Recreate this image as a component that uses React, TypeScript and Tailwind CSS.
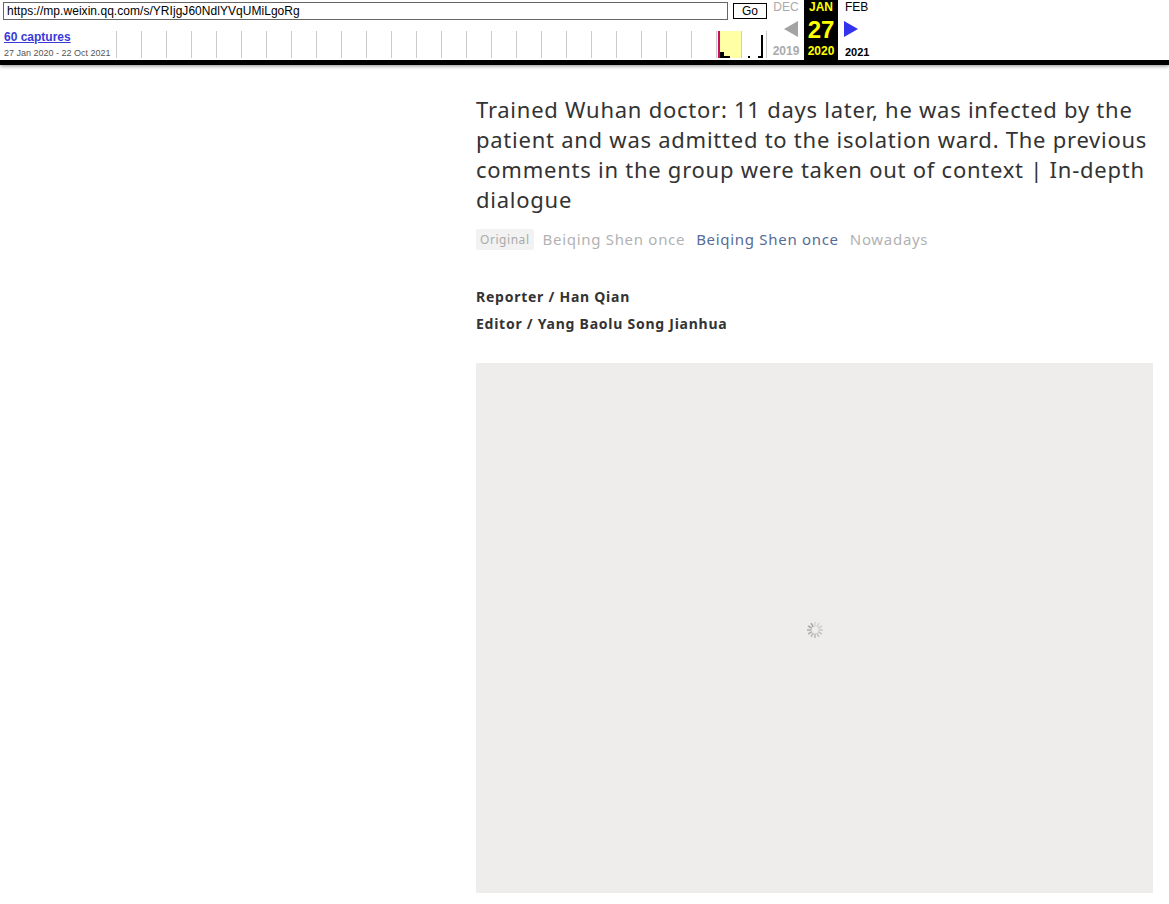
const ticks = Array.from({ length: 27 }, (_, i) => i * 25 + 0.5);

function Timeline() {
  return (
    <svg width="652" height="27" className="block">
      <rect x="601" y="0" width="25" height="27" fill="#ffffa6" />
      {ticks.map((x) => (
        <line key={x} x1={x} y1="0" x2={x} y2="27" stroke="#ccc" />
      ))}
      <rect x="602" y="0" width="2" height="27" fill="#c9105f" />
      <rect x="604" y="21" width="4" height="6" fill="#000" />
      <rect x="604" y="25" width="10" height="2" fill="#000" />
      <rect x="632" y="25" width="2" height="2" fill="#000" />
      <rect x="645" y="4" width="2" height="23" fill="#000" />
      <rect x="642" y="25" width="4" height="2" fill="#000" />
    </svg>
  );
}

function Spinner() {
  const spokes = Array.from({ length: 12 }, (_, i) => i);
  return (
    <svg width="18" height="18" viewBox="0 0 18 18">
      {spokes.map((i) => (
        <line
          key={i}
          x1="9"
          y1="1"
          x2="9"
          y2="5.5"
          stroke="#999"
          strokeWidth="1.6"
          opacity={0.25 + (i / 11) * 0.6}
          transform={`rotate(${i * 30} 9 9)`}
        />
      ))}
    </svg>
  );
}

export default function App() {
  return (
    <div className="bg-white min-h-[904px] font-['Noto_Sans',sans-serif]">
      {/* Wayback toolbar */}
      <div className="h-[65px] border-b-[5px] border-black shadow-[0_1px_4px_rgba(0,0,0,0.45)] flex font-['Liberation_Sans',sans-serif] text-black">
        <div className="w-[770px] shrink-0">
          <div className="flex pt-[2px] pl-[3px] h-[31px] items-start">
            <div className="w-[725px] h-[18px] border border-[#666] text-[12px] leading-[16px] pl-[3px] tracking-[0.04px]">
              https://mp.weixin.qq.com/s/YRIjgJ60NdlYVqUMiLgoRg
            </div>
            <div className="ml-[5px] mt-[1px] w-[34px] h-[16px] border border-black text-[12px] leading-[15px] text-center">
              Go
            </div>
          </div>
          <div className="flex">
            <div className="w-[116px] pl-[4px]">
              <a className="block -mt-[1px] text-[12px] leading-[14px] font-bold text-[#3a3ad8] underline">60 captures</a>
              <div className="mt-[4px] text-[9px] leading-[10px] text-[#555]">27 Jan 2020 - 22 Oct 2021</div>
            </div>
            <Timeline />
          </div>
        </div>
        <div className="w-[34px] pr-[2px] text-center text-[#aaa] font-bold">
          <div className="text-[12px] leading-[14px] font-normal">DEC</div>
          <div className="h-[30px] flex items-center justify-end pr-[4px]">
            <svg width="14" height="16" viewBox="0 0 14 16"><path d="M14 0v16L0 8z" fill="#a3a3a3" /></svg>
          </div>
          <div className="text-[12px] leading-[14px]">2019</div>
        </div>
        <div className="w-[34px] bg-black text-center text-[#ffff00] font-bold">
          <div className="text-[12px] leading-[14px]">JAN</div>
          <div className="h-[30px] text-[24px] leading-[32px]">27</div>
          <div className="text-[12px] leading-[14px]">2020</div>
        </div>
        <div className="w-[34px] text-left text-black">
          <div className="pl-[7px] text-[12px] leading-[14px]">FEB</div>
          <div className="h-[30px] flex items-center pl-[6px]">
            <svg width="14" height="16" viewBox="0 0 14 16"><path d="M0 0v16l14-8z" fill="#3333ee" /></svg>
          </div>
          <div className="pl-[7px] mt-[1px] text-[11px] leading-[14px] font-bold">2021</div>
        </div>
      </div>

      {/* Article */}
      <div className="pl-[476px] pr-[16px] pt-[29px] text-[#333]">
        <h1 className="text-[22px] leading-[30px] font-normal tracking-[0.75px]">
          Trained Wuhan doctor: 11 days later, he was infected by the patient and was admitted to the isolation ward. The previous comments in the group were taken out of context | In-depth dialogue
        </h1>
        <div className="mt-[14px] flex items-center text-[15px] leading-[22px] tracking-[0.7px] text-[#b2b2b2]">
          <span className="bg-[#f2f2f2] rounded-[2px] px-[4px] text-[12px] leading-[21px] tracking-[0.55px] text-[#aaa] mr-[9px]">Original</span>
          <span className="mr-[11px]">Beiqing Shen once</span>
          <span className="mr-[11px] text-[#576b95]">Beiqing Shen once</span>
          <span>Nowadays</span>
        </div>
        <p className="mt-[33px] text-[14px] leading-[27px] font-bold tracking-[0.75px]">Reporter / Han Qian</p>
        <p className="text-[14px] leading-[27px] font-bold tracking-[0.75px]">Editor / Yang Baolu Song Jianhua</p>
        <div className="mt-[26px] h-[530px] bg-[#eeedeb] flex items-center justify-center pt-[3px]">
          <Spinner />
        </div>
      </div>
    </div>
  );
}
